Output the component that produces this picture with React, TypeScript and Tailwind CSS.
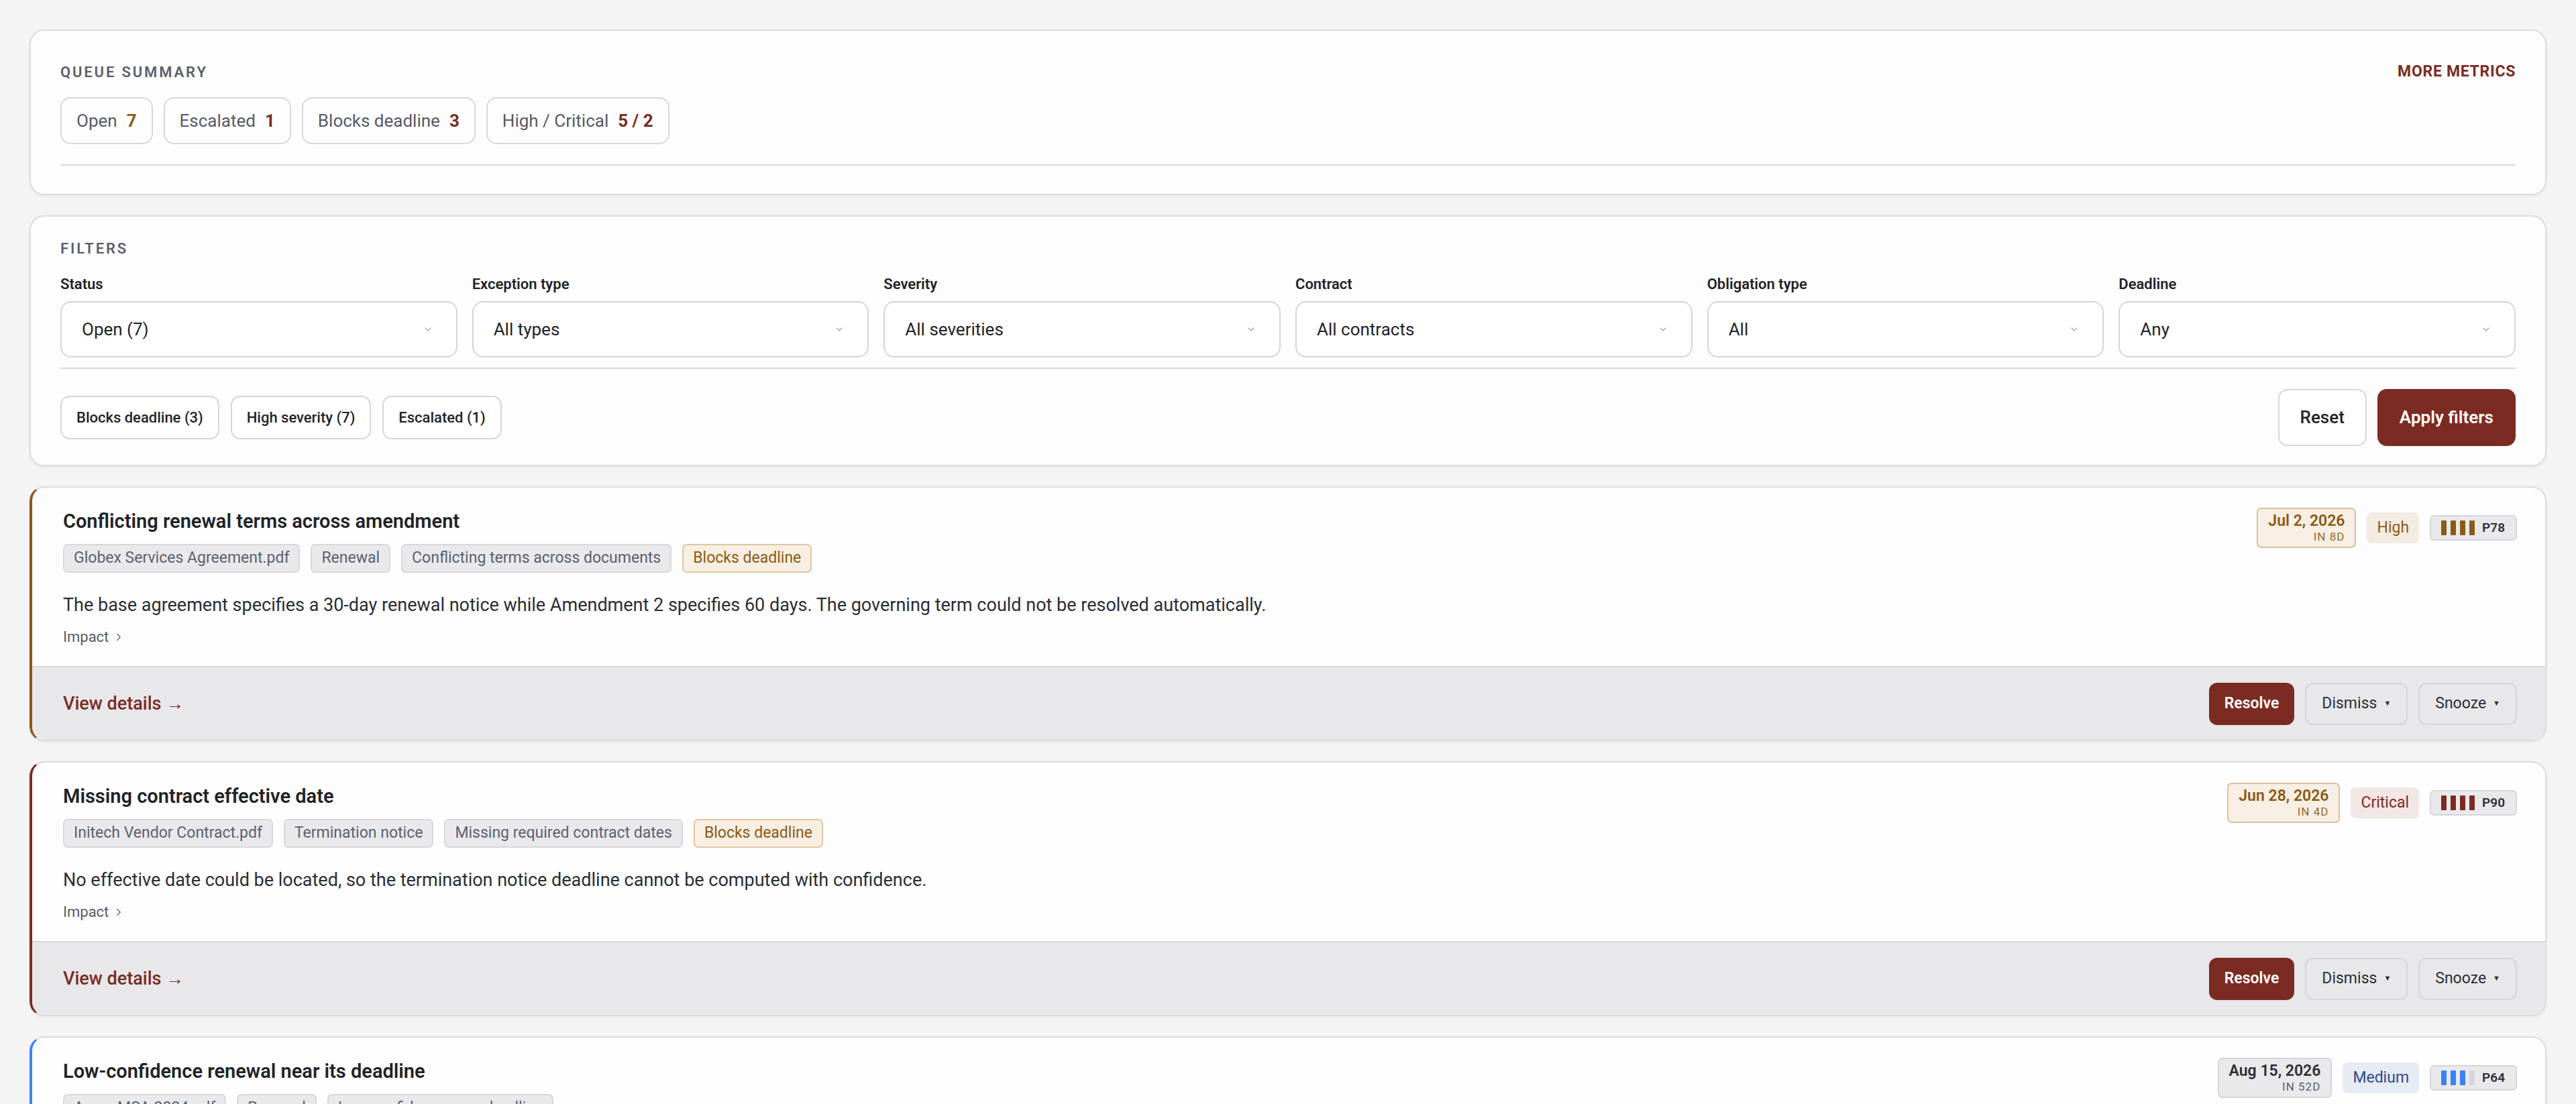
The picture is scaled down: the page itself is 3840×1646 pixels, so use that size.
import { ChevronDown, ChevronRight } from 'lucide-react';

interface Tag {
    label: string;
    warn?: boolean;
}

interface Issue {
    title: string;
    tags: Tag[];
    description: string;
    accent: string;
    date: string;
    due: string;
    dateTone: 'warn' | 'plain';
    severity: 'High' | 'Critical' | 'Medium';
    priority: number;
    bars: number;
    barColor: string;
}

const issues: Issue[] = [
    {
        title: 'Conflicting renewal terms across amendment',
        tags: [
            { label: 'Globex Services Agreement.pdf' },
            { label: 'Renewal' },
            { label: 'Conflicting terms across documents' },
            { label: 'Blocks deadline', warn: true },
        ],
        description:
            'The base agreement specifies a 30-day renewal notice while Amendment 2 specifies 60 days. The governing term could not be resolved automatically.',
        accent: 'border-l-[#8b5a14]',
        date: 'Jul 2, 2026',
        due: 'In 8d',
        dateTone: 'warn',
        severity: 'High',
        priority: 78,
        bars: 4,
        barColor: 'bg-[#8b5a14]',
    },
    {
        title: 'Missing contract effective date',
        tags: [
            { label: 'Initech Vendor Contract.pdf' },
            { label: 'Termination notice' },
            { label: 'Missing required contract dates' },
            { label: 'Blocks deadline', warn: true },
        ],
        description:
            'No effective date could be located, so the termination notice deadline cannot be computed with confidence.',
        accent: 'border-l-[#7b2b22]',
        date: 'Jun 28, 2026',
        due: 'In 4d',
        dateTone: 'warn',
        severity: 'Critical',
        priority: 90,
        bars: 4,
        barColor: 'bg-[#7b2b22]',
    },
    {
        title: 'Low-confidence renewal near its deadline',
        tags: [
            { label: 'Acme MSA 2024.pdf' },
            { label: 'Renewal' },
            { label: 'Low-confidence near deadline' },
        ],
        description:
            'The renewal notice window was extracted with low confidence and the deadline falls inside the review period.',
        accent: 'border-l-[#3b82f6]',
        date: 'Aug 15, 2026',
        due: 'In 52d',
        dateTone: 'plain',
        severity: 'Medium',
        priority: 64,
        bars: 3,
        barColor: 'bg-[#3b82f6]',
    },
];

const summary = [
    { label: 'Open', value: '7', color: 'text-[#8b5a14]' },
    { label: 'Escalated', value: '1', color: 'text-[#7b2b22]' },
    { label: 'Blocks deadline', value: '3', color: 'text-[#7b2b22]' },
    { label: 'High / Critical', value: '5 / 2', color: 'text-[#7b2b22]' },
];

const filters = [
    { label: 'Status', value: 'Open (7)' },
    { label: 'Exception type', value: 'All types' },
    { label: 'Severity', value: 'All severities' },
    { label: 'Contract', value: 'All contracts' },
    { label: 'Obligation type', value: 'All' },
    { label: 'Deadline', value: 'Any' },
];

const severityStyle = {
    High: 'bg-[#f3ece3] text-[#8b5a14]',
    Critical: 'bg-[#f1e8e6] text-[#7b2b22]',
    Medium: 'bg-[#e6ebf4] text-[#2c4a8c]',
};

const IssueCard = ({ issue }: { issue: Issue }) => {
    const warn = issue.dateTone === 'warn';
    return (
        <article
            className={`overflow-hidden rounded-[22px] border-2 border-l-4 border-[#dcdce0] ${issue.accent} bg-[#fdfdfd] shadow-[0_2px_4px_rgba(0,0,0,0.06)]`}
        >
            <div className="flex items-start justify-between pl-[46px] pr-[42px] pt-[32px] pb-[28px]">
                <div>
                    <h3 className="text-[29px] font-semibold leading-[36px] text-[#1f2328]">{issue.title}</h3>
                    <div className="mt-[16px] flex gap-[16px]">
                        {issue.tags.map((tag) => (
                            <span
                                key={tag.label}
                                className={`flex h-[43px] items-center rounded-[7px] border-2 px-[14px] text-[23px] ${
                                    tag.warn
                                        ? 'border-[#dfc6a3] bg-[#f8efe2] text-[#8b5a14]'
                                        : 'border-[#d8d8dc] bg-[#e9e9ec] text-[#5b616e]'
                                }`}
                            >
                                {tag.label}
                            </span>
                        ))}
                    </div>
                    <p className="mt-[29px] text-[27px] leading-[38px] text-[#2a2e35]">{issue.description}</p>
                    <button className="mt-[14px] flex items-center gap-[6px] text-[22px] leading-[30px] text-[#555b68]">
                        Impact
                        <ChevronRight size={18} strokeWidth={1.6} />
                    </button>
                </div>
                <div className="-mt-[2px] flex items-center gap-[16px]">
                    <div
                        className={`flex flex-col items-end rounded-[7px] border-2 px-[15px] py-[5px] ${
                            warn ? 'border-[#dcc09c] bg-[#f7efe4]' : 'border-[#d6d6da] bg-[#e9e9ec]'
                        }`}
                    >
                        <span
                            className={`text-[23px] font-semibold leading-[26px] ${
                                warn ? 'text-[#8b5a14]' : 'text-[#2a2e35]'
                            }`}
                        >
                            {issue.date}
                        </span>
                        <span
                            className={`text-[17px] uppercase leading-[20px] tracking-[0.06em] ${
                                warn ? 'text-[#9a6a2a]' : 'text-[#5b616e]'
                            }`}
                        >
                            {issue.due}
                        </span>
                    </div>
                    <span
                        className={`flex h-[46px] items-center rounded-[7px] px-[15px] text-[23px] ${severityStyle[issue.severity]}`}
                    >
                        {issue.severity}
                    </span>
                    <div className="flex h-[38px] items-center gap-[11px] rounded-[7px] border-2 border-[#d6d6da] bg-[#e9e9ec] pl-[15px] pr-[16px]">
                        <div className="flex gap-[6px]">
                            {[0, 1, 2, 3].map((i) => (
                                <span
                                    key={i}
                                    className={`h-[22px] w-[8px] rounded-[1px] ${
                                        i < issue.bars ? issue.barColor : 'bg-[#d6d6da]'
                                    }`}
                                />
                            ))}
                        </div>
                        <span className="text-[19px] font-semibold text-[#2a2e35]">P{issue.priority}</span>
                    </div>
                </div>
            </div>
            <div className="flex h-[110px] items-center justify-between border-t-2 border-[#d9d9dd] bg-[#e8e8ea] pl-[46px] pr-[42px]">
                <a className="text-[27px] font-medium text-[#7b2b22]">View details →</a>
                <div className="flex gap-[16px]">
                    <button className="h-[63px] rounded-[12px] bg-[#7b2b22] px-[23px] text-[23px] font-semibold text-white">
                        Resolve
                    </button>
                    <button className="flex h-[63px] items-center gap-[10px] rounded-[12px] border-2 border-[#d6d6da] px-[23px] text-[23px] text-[#2a2e35]">
                        Dismiss <span className="text-[11px]">▼</span>
                    </button>
                    <button className="flex h-[63px] items-center gap-[10px] rounded-[12px] border-2 border-[#d6d6da] px-[23px] text-[23px] text-[#2a2e35]">
                        Snooze <span className="text-[11px]">▼</span>
                    </button>
                </div>
            </div>
        </article>
    );
};

const App = () => {
    return (
        <div className="min-h-screen bg-[#f4f4f4] px-[44px] pt-[44px] pb-[44px] font-['Roboto','Liberation_Sans',sans-serif] text-[#1f2328]">
            <div className="flex flex-col gap-[30px]">
                <section className="rounded-[22px] border-2 border-[#dcdce0] bg-[#fdfdfd] px-[44px] pt-[31px] pb-[42px] shadow-[0_2px_4px_rgba(0,0,0,0.06)]">
                    <div className="flex h-[60px] items-center justify-between">
                        <h2 className="text-[22px] font-semibold uppercase tracking-[0.13em] text-[#5a606b]">
                            Queue summary
                        </h2>
                        <button className="text-[23px] font-bold uppercase tracking-[0.03em] text-[#7b2b22]">
                            More metrics
                        </button>
                    </div>
                    <div className="mt-[8px] flex gap-[16px] border-b-2 border-[#d9d9dd] pb-[30px]">
                        {summary.map((s) => (
                            <div
                                key={s.label}
                                className="flex h-[70px] items-center gap-[14px] rounded-[15px] border-2 border-[#d8d8dc] px-[22px] text-[26px]"
                            >
                                <span className="text-[#555b68]">{s.label}</span>
                                <span className={`font-bold ${s.color}`}>{s.value}</span>
                            </div>
                        ))}
                    </div>
                </section>

                <section className="rounded-[22px] border-2 border-[#dcdce0] bg-[#fdfdfd] px-[44px] pt-[33px] pb-[28px] shadow-[0_2px_4px_rgba(0,0,0,0.06)]">
                    <h2 className="text-[22px] font-semibold uppercase leading-[30px] tracking-[0.13em] text-[#5a606b]">
                        Filters
                    </h2>
                    <div className="mt-[23px] grid grid-cols-6 gap-x-[22px] border-b-2 border-[#d9d9dd] pb-[15px]">
                        {filters.map((f) => (
                            <div key={f.label} className="flex flex-col gap-[10px]">
                                <label className="text-[22px] font-semibold leading-[30px] text-[#1f2328]">{f.label}</label>
                                <div className="flex h-[84px] items-center justify-between rounded-[16px] border-2 border-[#d6d6da] bg-white pl-[30px] pr-[34px] text-[26px]">
                                    <span>{f.value}</span>
                                    <ChevronDown size={16} strokeWidth={1.5} className="text-[#5b6478]" />
                                </div>
                            </div>
                        ))}
                    </div>
                    <div className="flex items-center justify-between pt-[30px]">
                        <div className="flex gap-[17px]">
                            {['Blocks deadline (3)', 'High severity (7)', 'Escalated (1)'].map((c) => (
                                <button
                                    key={c}
                                    className="h-[65px] rounded-[14px] border-2 border-[#d6d6da] bg-white px-[22px] text-[22px] font-medium text-[#1f2328]"
                                >
                                    {c}
                                </button>
                            ))}
                        </div>
                        <div className="flex gap-[16px]">
                            <button className="h-[85px] rounded-[14px] border-2 border-[#d6d6da] bg-white px-[31px] text-[26px] font-medium">
                                Reset
                            </button>
                            <button className="h-[85px] rounded-[14px] bg-[#7b2b22] px-[33px] text-[26px] font-semibold text-white">
                                Apply filters
                            </button>
                        </div>
                    </div>
                </section>

                {issues.map((issue) => (
                    <IssueCard key={issue.title} issue={issue} />
                ))}
            </div>
        </div>
    );
};

export default App;
